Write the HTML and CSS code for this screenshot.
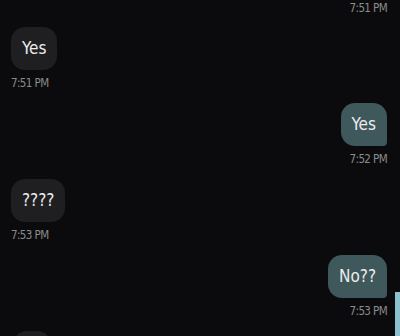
FILE: index.html
```html
<!DOCTYPE html>
<html lang="en">
<head>
  <meta charset="UTF-8" />
  <title>Chat</title>
  <link rel="stylesheet" href="styles.css">
</head>
<body>

  <div class="chat">
    <div class="msg sent first">
      <span class="time">7:51 PM</span>
    </div>

    <div class="msg received">
      <div class="bubble">Yes</div>
      <span class="time">7:51 PM</span>
    </div>

    <div class="msg sent">
      <div class="bubble">Yes</div>
      <span class="time">7:52 PM</span>
    </div>

    <div class="msg received">
      <div class="bubble">????</div>
      <span class="time">7:53 PM</span>
    </div>

    <div class="msg sent">
      <div class="bubble">No??</div>
      <span class="time">7:53 PM</span>
    </div>

    <!-- next message, scrolled below the fold -->
    <div class="msg received">
      <div class="bubble placeholder"></div>
    </div>
  </div>

  <div class="scroll-thumb"></div>

</body>
</html>
```

FILE: styles.css
```css
html, body {
  margin: 0;
  height: 100%;
  overflow: hidden;
}

body {
  background: #0b0b0d;
  font-family: 'DejaVu Sans Condensed', 'DejaVu Sans', sans-serif;
  font-stretch: condensed;
  position: relative;
}

.chat {
  display: flex;
  flex-direction: column;
  padding: 0 13px 0 11px;
  margin-top: 1px;
}

.msg {
  display: flex;
  flex-direction: column;
  margin-bottom: 13px;
}

.msg.received { align-items: flex-start; }
.msg.sent { align-items: flex-end; }

.msg.first { margin-bottom: 12px; }

.bubble {
  color: #ececec;
  font-size: 17px;
  line-height: 19px;
  padding: 12px 11px;
  border-radius: 14px;
}

.bubble.placeholder {
  width: 16px;
  height: 19px;
  margin-left: 2px;
}

.received .bubble {
  background: #1f1f22;
}

.sent .bubble {
  background: #3e585b;
  border-bottom-right-radius: 4px;
}

.time {
  margin-top: 6px;
  font-size: 11.5px;
  line-height: 14px;
  letter-spacing: -0.6px;
  color: #8b8b8b;
}

.msg.first .time {
  margin-top: 0;
}

.scroll-thumb {
  position: absolute;
  right: 0;
  top: 292px;
  width: 5px;
  height: 44px;
  background: #8cc2cf;
}
```
